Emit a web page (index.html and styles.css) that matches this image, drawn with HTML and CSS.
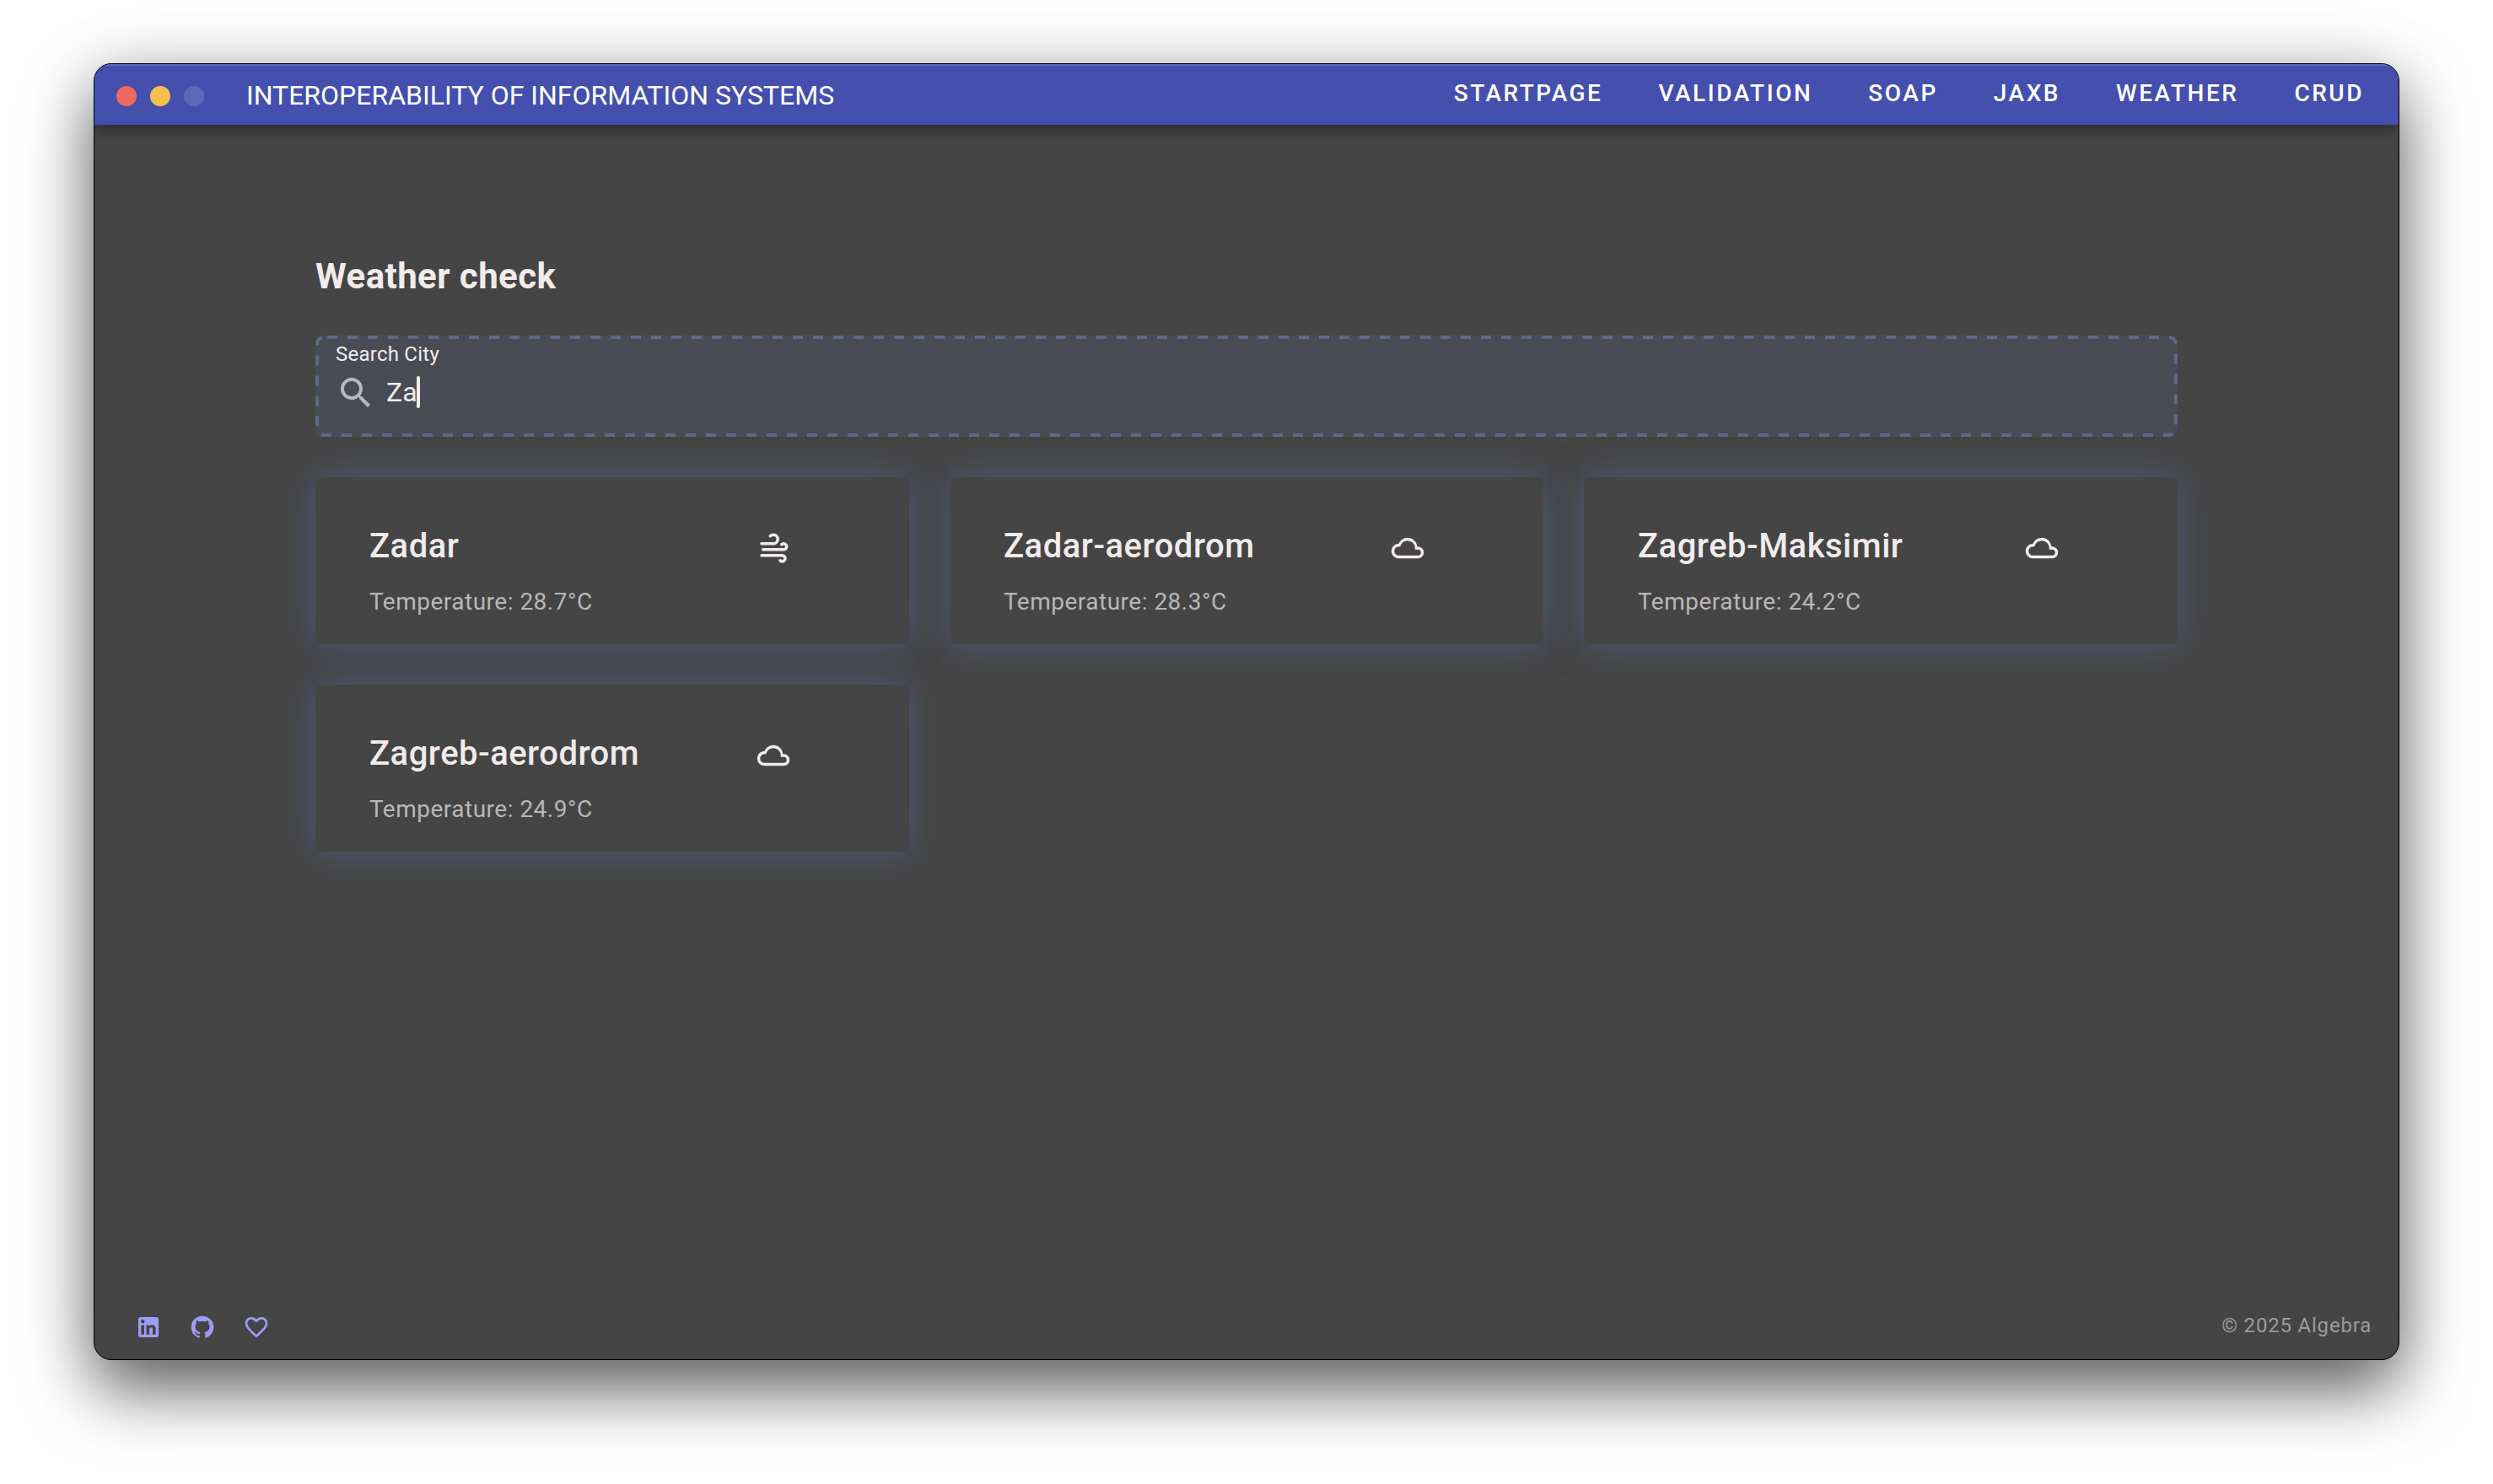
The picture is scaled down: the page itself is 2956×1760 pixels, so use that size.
FILE: index.html
```html
<!DOCTYPE html>
<html lang="en">
<head>
<meta charset="utf-8">
<title>Interoperability of Information Systems</title>
<link rel="stylesheet" href="styles.css">
</head>
<body>
<svg class="sprite" aria-hidden="true">
  <symbol id="cloudy" viewBox="0 0 24 24"><path d="M6,19A5,5 0 0,1 1,14A5,5 0 0,1 6,9C7,6.65 9.3,5 12,5C15.43,5 18.24,7.66 18.5,11.03L19,11A4,4 0 0,1 23,15A4,4 0 0,1 19,19H6M19,13H17V12A5,5 0 0,0 12,7C9.5,7 7.45,8.82 7.06,11.19C6.73,11.07 6.37,11 6,11A3,3 0 0,0 3,14A3,3 0 0,0 6,17H19A2,2 0 0,0 21,15A2,2 0 0,0 19,13Z"/></symbol>
  <symbol id="windy" viewBox="0 0 24 24"><path d="M4,10A1,1 0 0,1 3,9A1,1 0 0,1 4,8H12A2,2 0 0,0 14,6A2,2 0 0,0 12,4C11.45,4 10.95,4.22 10.59,4.59C10.2,5 9.56,5 9.17,4.59C8.78,4.2 8.78,3.56 9.17,3.17C9.9,2.45 10.9,2 12,2A4,4 0 0,1 16,6A4,4 0 0,1 12,10H4M19,12A1,1 0 0,0 20,11A1,1 0 0,0 19,10C18.72,10 18.47,10.11 18.29,10.29C17.9,10.68 17.27,10.68 16.88,10.29C16.5,9.9 16.5,9.27 16.88,8.88C17.42,8.34 18.17,8 19,8A3,3 0 0,1 22,11A3,3 0 0,1 19,14H5A1,1 0 0,1 4,13A1,1 0 0,1 5,12H19M18,18H4A1,1 0 0,1 3,17A1,1 0 0,1 4,16H18A3,3 0 0,1 21,19A3,3 0 0,1 18,22C17.17,22 16.42,21.66 15.88,21.12C15.5,20.73 15.5,20.1 15.88,19.71C16.27,19.32 16.9,19.32 17.29,19.71C17.47,19.89 17.72,20 18,20A1,1 0 0,0 19,19A1,1 0 0,0 18,18Z"/></symbol>
</svg>
<div class="window">
  <header class="app-bar">
    <div class="controls">
      <button class="control close" aria-label="Close"></button>
      <button class="control minimize" aria-label="Minimize"></button>
      <button class="control maximize" aria-label="Maximize" disabled></button>
    </div>
    <div class="app-title">INTEROPERABILITY OF INFORMATION SYSTEMS</div>
    <nav class="nav">
      <a href="#startpage">STARTPAGE</a>
      <a href="#validation">VALIDATION</a>
      <a href="#soap">SOAP</a>
      <a href="#jaxb">JAXB</a>
      <a href="#weather">WEATHER</a>
      <a href="#crud">CRUD</a>
    </nav>
  </header>
  <main class="content">
    <h1>Weather check</h1>
    <div class="search">
      <svg class="search-outline" aria-hidden="true"><rect/></svg>
      <label for="city">Search City</label>
      <div class="search-row">
        <svg class="search-icon" viewBox="0 0 24 24" aria-hidden="true"><path d="M9.5,3A6.5,6.5 0 0,1 16,9.5C16,11.11 15.41,12.59 14.44,13.73L14.71,14H15.5L20.5,19L19,20.5L14,15.5V14.71L13.73,14.44C12.59,15.41 11.11,16 9.5,16A6.5,6.5 0 0,1 3,9.5A6.5,6.5 0 0,1 9.5,3M9.5,5C7,5 5,7 5,9.5C5,12 7,14 9.5,14C12,14 14,12 14,9.5C14,7 12,5 9.5,5Z"/></svg>
        <input id="city" type="text" value="Za">
        <span class="caret"></span>
      </div>
    </div>
    <section class="cards">
      <article class="card">
        <div><h2>Zadar</h2><p>Temperature: 28.7°C</p></div>
        <svg class="weather-icon"><use href="#windy"/></svg>
      </article>
      <article class="card">
        <div><h2>Zadar-aerodrom</h2><p>Temperature: 28.3°C</p></div>
        <svg class="weather-icon"><use href="#cloudy"/></svg>
      </article>
      <article class="card">
        <div><h2>Zagreb-Maksimir</h2><p>Temperature: 24.2°C</p></div>
        <svg class="weather-icon"><use href="#cloudy"/></svg>
      </article>
      <article class="card">
        <div><h2>Zagreb-aerodrom</h2><p>Temperature: 24.9°C</p></div>
        <svg class="weather-icon"><use href="#cloudy"/></svg>
      </article>
    </section>
  </main>
  <footer class="footer">
    <div class="social">
      <a href="#linkedin" aria-label="LinkedIn"><svg viewBox="0 0 24 24"><path d="M19 3A2 2 0 0 1 21 5V19A2 2 0 0 1 19 21H5A2 2 0 0 1 3 19V5A2 2 0 0 1 5 3H19M18.5 18.5V13.2A3.26 3.26 0 0 0 15.24 9.94C14.39 9.94 13.4 10.46 12.92 11.24V10.13H10.13V18.5H12.92V13.57C12.92 12.8 13.54 12.17 14.31 12.17A1.4 1.4 0 0 1 15.71 13.57V18.5H18.5M6.88 8.56A1.68 1.68 0 0 0 8.56 6.88C8.56 5.95 7.81 5.19 6.88 5.19A1.69 1.69 0 0 0 5.19 6.88C5.19 7.81 5.95 8.56 6.88 8.56M8.27 18.5V10.13H5.5V18.5H8.27Z"/></svg></a>
      <a href="#github" aria-label="GitHub"><svg viewBox="0 0 24 24"><path d="M12,2A10,10 0 0,0 2,12C2,16.42 4.87,20.17 8.84,21.5C9.34,21.58 9.5,21.27 9.5,21C9.5,20.77 9.5,20.14 9.5,19.31C6.73,19.91 6.14,17.97 6.14,17.97C5.68,16.81 5.03,16.5 5.03,16.5C4.12,15.88 5.1,15.9 5.1,15.9C6.1,15.97 6.63,16.93 6.63,16.93C7.5,18.45 8.97,18 9.54,17.76C9.63,17.11 9.89,16.67 10.17,16.42C7.95,16.17 5.62,15.31 5.62,11.5C5.62,10.39 6,9.5 6.65,8.79C6.55,8.54 6.2,7.5 6.75,6.15C6.75,6.15 7.59,5.88 9.5,7.17C10.29,6.95 11.15,6.84 12,6.84C12.85,6.84 13.71,6.95 14.5,7.17C16.41,5.88 17.25,6.15 17.25,6.15C17.8,7.5 17.45,8.54 17.35,8.79C18,9.5 18.38,10.39 18.38,11.5C18.38,15.32 16.04,16.16 13.81,16.41C14.17,16.72 14.5,17.33 14.5,18.26C14.5,19.6 14.5,20.68 14.5,21C14.5,21.27 14.66,21.59 15.17,21.5C19.14,20.16 22,16.42 22,12A10,10 0 0,0 12,2Z"/></svg></a>
      <a href="#like" aria-label="Like"><svg viewBox="0 0 24 24"><path d="M12.1,18.55L12,18.65L11.89,18.55C7.14,14.24 4,11.39 4,8.5C4,6.5 5.5,5 7.5,5C9.04,5 10.54,6 11.07,7.36H12.93C13.46,6 14.96,5 16.5,5C18.5,5 20,6.5 20,8.5C20,11.39 16.86,14.24 12.1,18.55M16.5,3C14.76,3 13.09,3.81 12,5.08C10.91,3.81 9.24,3 7.5,3C4.42,3 2,5.41 2,8.5C2,12.27 5.4,15.36 10.55,20.03L12,21.35L13.45,20.03C18.6,15.36 22,12.27 22,8.5C22,5.41 19.58,3 16.5,3Z"/></svg></a>
    </div>
    <small>© 2025 Algebra</small>
  </footer>
</div>
</body>
</html>
```
FILE: styles.css
```css
* { box-sizing: border-box; }

body {
  display: flex;
  min-height: 100vh;
  margin: 0;
  padding: 75px 111px 147px;
  background: #fff;
  color: #f1ebeb;
  font-family: Roboto, "Liberation Sans", sans-serif;
}

h1, h2, p { margin: 0; }
svg { display: block; fill: currentColor; }
.sprite { position: absolute; width: 0; height: 0; }

.window {
  display: flex;
  flex: 1;
  flex-direction: column;
  overflow: hidden;
  border: 1px solid #000;
  border-radius: 21px;
  background: #454545;
  box-shadow: 0 36px 80px rgba(0, 0, 0, .6), 0 0 80px rgba(0, 0, 0, .12);
}

.app-bar {
  display: flex;
  align-items: center;
  height: 72px;
  padding: 0 9px 0 26px;
  background: #444fae;
  color: #fff;
  box-shadow: inset 0 2px #5b68b9, 0 4px 18px rgba(0, 0, 0, .45);
}
.controls { display: flex; gap: 16px; padding-top: 4px; }
.control {
  width: 24px;
  height: 24px;
  padding: 0;
  border: 0;
  border-radius: 50%;
}
.close { background: #ec6a5e; }
.minimize { background: #f4bf4f; }
.maximize { background: #5e68b9; }
.app-title { margin-left: 50px; padding-top: 2px; font-size: 32px; line-height: 40px; }
.nav { display: flex; gap: 2px; margin-left: auto; padding-bottom: 2px; }
.nav a {
  padding: 0 32px;
  color: inherit;
  font-size: 28px;
  font-weight: 500;
  line-height: 40px;
  letter-spacing: .09em;
  text-decoration: none;
}

.content { flex: 1; padding: 150px 262px 48px; }
h1 { font-size: 42px; font-weight: 700; line-height: 60px; letter-spacing: .01em; }

.search {
  position: relative;
  height: 120px;
  margin: 40px 0 48px;
  padding: 8px 24px;
  border-radius: 10px;
  background: #494c55;
}
.search-outline { position: absolute; inset: 0; width: 100%; height: 100%; }
.search-outline rect {
  x: 2px;
  y: 2px;
  width: calc(100% - 4px);
  height: calc(100% - 4px);
  rx: 8px;
  fill: none;
  stroke: #5d6986;
  stroke-width: 4px;
  stroke-dasharray: 12px;
  stroke-dashoffset: -4px;
}
.search label { display: block; font-size: 24px; line-height: 28px; letter-spacing: .01em; }
.search-row { display: flex; align-items: center; height: 48px; margin-top: 8px; }
.search-icon { width: 48px; height: 48px; color: #b9b9b9; }
.search input {
  field-sizing: content;
  margin-left: 12px;
  padding: 0 0 2px;
  border: 0;
  outline: 0;
  background: none;
  color: inherit;
  font: 32px/40px Roboto, "Liberation Sans", sans-serif;
}
.caret { width: 4px; height: 38px; margin: 0 0 2px -1px; border-radius: 2px; background: #f6efea; }

.cards { display: grid; grid-template-columns: repeat(3, 1fr); gap: 48px; }
.card {
  display: flex;
  justify-content: space-between;
  padding: 50px 140px 30px 64px;
  border-radius: 8px;
  background: #454545;
  box-shadow: 0 0 40px rgba(93, 113, 177, .5);
}
.card h2 { font-size: 40px; font-weight: 500; line-height: 64px; letter-spacing: .0125em; }
.card p { margin-top: 14px; color: #b9b7b7; font-size: 28px; line-height: 40px; letter-spacing: .0178em; }
.weather-icon { width: 42px; height: 42px; margin-top: 13px; }

.footer {
  display: flex;
  align-items: center;
  justify-content: space-between;
  height: 76px;
  padding: 0 32px 0 48px;
}
.social { display: flex; gap: 32px; }
.social a { color: #9f9cf7; }
.social svg { width: 32px; height: 32px; }
.footer small { padding-bottom: 4px; color: #9b9b9b; font-size: 24px; line-height: 40px; letter-spacing: .0333em; }
```
